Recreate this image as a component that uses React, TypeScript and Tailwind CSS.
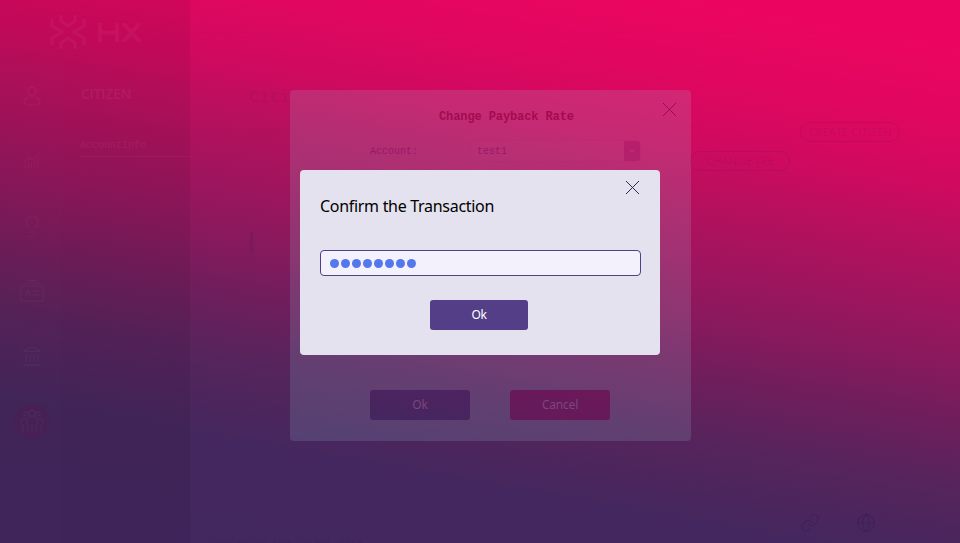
import React from "react";
import { ChartNoAxesCombined, Lightbulb, Landmark, Link, Globe, X } from "lucide-react";

const MONO = "font-['Liberation_Mono',monospace]";

function Logo() {
  return (
    <div className="flex h-[36px] items-center gap-[12px] pl-[50px] opacity-[0.035]">
      <svg width="36" height="36" viewBox="0 0 36 36" fill="none" stroke="#fff" strokeWidth="3">
        <path d="M11 1v6l7 5 7-5V1M11 35v-6l7-5 7 5v6M2 5v7l10 6-10 6v7M34 5v7l-10 6 10 6v7" />
      </svg>
      <svg width="44" height="19" viewBox="0 0 44 19" fill="none" stroke="#fff" strokeWidth="4">
        <path d="M2 0v19M19 0v19M2 9.5h17M25 0l17 19M42 0L25 19" />
      </svg>
    </div>
  );
}

function CardIcon() {
  return (
    <svg width="24" height="22" viewBox="0 0 24 22" fill="none" stroke="currentColor">
      <path d="M1 6h22v15H1zM4 3h16M7 0.5h10M6 16l2-6 2 6M13 11h6M13 15h6" />
    </svg>
  );
}

function TeamIcon() {
  return (
    <svg width="24" height="24" viewBox="0 0 24 24" fill="none" stroke="currentColor">
      <circle cx="12" cy="4" r="3" />
      <circle cx="6" cy="5" r="2.2" />
      <circle cx="18" cy="5" r="2.2" />
      <path d="M8 23v-7c-2-1-2-7 1-8h6c3 1 3 7 1 8v7M12 16v7M3 23v-7c-3-1-2-6 0-6h3M21 23v-7c3-1 2-6 0-6h-3" />
    </svg>
  );
}

function UserIcon() {
  return (
    <svg width="18" height="20" viewBox="0 0 18 20" fill="none" stroke="currentColor" strokeWidth="1.3">
      <rect x="5.3" y="1" width="7.4" height="9" rx="3.7" />
      <path d="M6 11.5c-3 .6-5 2.400-5 4.300C1 18 3.500 19 9 19s8-1 8-3.200c0-1.900-2-3.700-5-4.300" />
    </svg>
  );
}

function SideItem({ children }: { children: React.ReactNode }) {
  return <div className="flex h-[65px] items-center justify-center text-white/[0.035]">{children}</div>;
}

function Sidebar() {
  return (
    <aside className="flex w-[190px] shrink-0 flex-col bg-black/[0.06] pt-[14px]">
      <Logo />
      <div className="flex flex-1 pt-[13px]">
        <nav className="w-[62px] bg-white/[0.006] pl-[1px]">
          <SideItem><UserIcon /></SideItem>
          <SideItem><ChartNoAxesCombined size={19} strokeWidth={1.3} /></SideItem>
          <SideItem><Lightbulb size={24} strokeWidth={1.2} /></SideItem>
          <SideItem><CardIcon /></SideItem>
          <SideItem><Landmark size={22} strokeWidth={1.2} /></SideItem>
          <SideItem>
            <span className="flex size-[36px] items-center justify-center rounded-full bg-[#61124a]/20"><TeamIcon /></span>
          </SideItem>
          <div className="flex justify-center gap-[8px] pt-[64px]">
            <i className="size-px bg-white/5" /><i className="size-px bg-white/5" /><i className="size-px bg-white/5" />
          </div>
        </nav>
        <div className="flex-1 pl-[18px] pt-[21px] text-white/[0.05]">
          <div className="pl-px font-['Open_Sans',sans-serif] text-[13.5px] leading-[20px] font-semibold">CITIZEN</div>
          <div className={`${MONO} mt-[31px] h-[22px] border-b border-white/[0.04] pt-[4px] text-[10px] leading-[14px]`}>AccountInfo</div>
          <div className={`${MONO} pt-[12px] text-[10px] leading-[14px] text-white/[0.03]`}>Proposal</div>
        </div>
      </div>
    </aside>
  );
}

function MainPage() {
  return (
    <main className="flex min-w-0 flex-1 flex-col text-[#30205c]/[0.13]">
      <div className="flex h-[33px] items-center justify-end gap-[24px] border-b border-[#30205c]/[0.02] pr-[12px] text-[#30205c]/[0.05]">
        <span className="h-px w-[8px] bg-current" />
        <X size={10} strokeWidth={1} />
      </div>
      <div className={`${MONO} mt-[52px] pl-[59px] text-[17px] leading-[26px]`}>Citi</div>
      <div className="flex h-[30px] items-center justify-between pl-[60px] pr-[60px] pt-[12px]">
        <span className={`${MONO} text-[10px] text-[#30205c]/[0.06]`}>CURREN</span>
        <span className="flex h-[20px] w-[100px] shrink-0 items-center justify-center rounded-full border border-current font-['Open_Sans',sans-serif] text-[11px] tracking-[0.1px]">CREATE CITIZEN</span>
      </div>
      <div className="flex h-[30px] items-center justify-between pl-[60px] pr-[170px] pt-[10px]">
        <span className={`${MONO} text-[10px] text-[#30205c]/[0.04]`}>ACCOUN</span>
        <span className="flex h-[20px] w-[100px] items-center justify-center rounded-full border border-current font-['Open_Sans',sans-serif] text-[11px] tracking-[0.3px]">CHANGE FEE</span>
      </div>
      <div className="ml-[60px] mt-[61px] h-[20px] w-[3px] bg-[#30205c]/[0.16]" />
      <div className="mt-auto flex h-[20px] items-center gap-[36px] pl-[610px] text-[#20184c]/25">
        <Link size={20} strokeWidth={1.4} />
        <Globe size={20} strokeWidth={1.4} />
      </div>
      <div className={`${MONO} h-[10px] pl-[22px] pt-[4px] text-[10px] leading-[14px] text-[#20184c]/15`}>currently the latest data</div>
    </main>
  );
}

function RateDialog() {
  return (
    <section className="absolute left-[290px] top-[90px] flex h-[351px] w-[401px] flex-col rounded-[4px] bg-[#a0e0e8]/[0.15]">
      <header className="flex h-[50px] items-center pl-[149px] pr-[14px]">
        <h2 className={`${MONO} mt-[3px] flex-1 text-[12px] leading-[16px] font-bold tracking-[-0.1px] text-[#960043]/75`}>Change Payback Rate</h2>
        <svg className="mb-[11px]" width="15" height="15" viewBox="0 0 15 15" stroke="#8e0050" strokeOpacity=".8"><path d="M1 1l13 13M14 1L1 14" /></svg>
      </header>
      <div className="flex h-[22px] items-center pl-[80px] text-[#7c0058]/50">
        <span className={`${MONO} w-[101px] text-[10px]`}>Account:</span>
        <div className="flex h-[22px] w-[170px] overflow-hidden rounded-[4px] border border-[#a01060]/10 bg-white/[0.01]">
          <span className={`${MONO} flex-1 pl-[5px] text-[10px] leading-[22px]`}>test1</span>
          <span className="flex w-[16px] items-center justify-center bg-[#9a0058]/30">
            <svg width="6" height="3" viewBox="0 0 6 3"><path d="M0 0h6L3 3z" fill="#ce2470" /></svg>
          </span>
        </div>
      </div>
      <footer className="mt-auto flex gap-[40px] pb-[21px] pl-[80px] font-['Noto_Sans',sans-serif] text-[12px] tracking-[-0.2px] text-[#7c467a]">
        <button className="h-[30px] w-[100px] rounded-[3px] bg-[linear-gradient(191deg,#4e2360,#45265f)]">Ok</button>
        <button className="h-[30px] w-[100px] rounded-[3px] bg-[linear-gradient(191deg,#6c1859,#631b5a)]">Cancel</button>
      </footer>
    </section>
  );
}

function ConfirmDialog() {
  return (
    <section className="absolute left-[300px] top-[170px] flex h-[185px] w-[360px] flex-col rounded-[4px] bg-[#e4e2ee] px-[20px] font-['Noto_Sans',sans-serif]">
      <div className="flex h-[24px] justify-end pt-[11px]">
        <svg width="13" height="13" viewBox="0 0 13 13" className="mr-[1px]" stroke="#2d2850"><path d="M0 0l13 13M13 0L0 13" /></svg>
      </div>
      <h1 className="text-[16px] leading-[24px] tracking-[-0.3px] text-black">Confirm the Transaction</h1>
      <div className="mt-[32px] flex h-[26px] w-[321px] shrink-0 items-center gap-[2px] rounded-[4px] border border-[#553e88] bg-[#f3f1fb] pl-[9px]">
        {Array.from({ length: 8 }, (_, i) => (
          <span key={i} className="size-[9px] rounded-full bg-[#5577ee]" />
        ))}
      </div>
      <button className="ml-[110px] mt-[24px] h-[30px] w-[98px] shrink-0 rounded-[3px] bg-[#553e88] text-[12px] tracking-[-0.3px] text-white">Ok</button>
    </section>
  );
}

export default function App() {
  return (
    <div className="relative flex h-[543px] w-[960px] overflow-hidden bg-[linear-gradient(190deg,#ec0560_6%,#df0760_18%,#ce0a5f_27%,#bb0f5e_33%,#8a195d_51%,#731d5c_58%,#57245c_68%,#44275e_80%,#42275f_100%)]">
      <Sidebar />
      <MainPage />
      <RateDialog />
      <ConfirmDialog />
    </div>
  );
}
